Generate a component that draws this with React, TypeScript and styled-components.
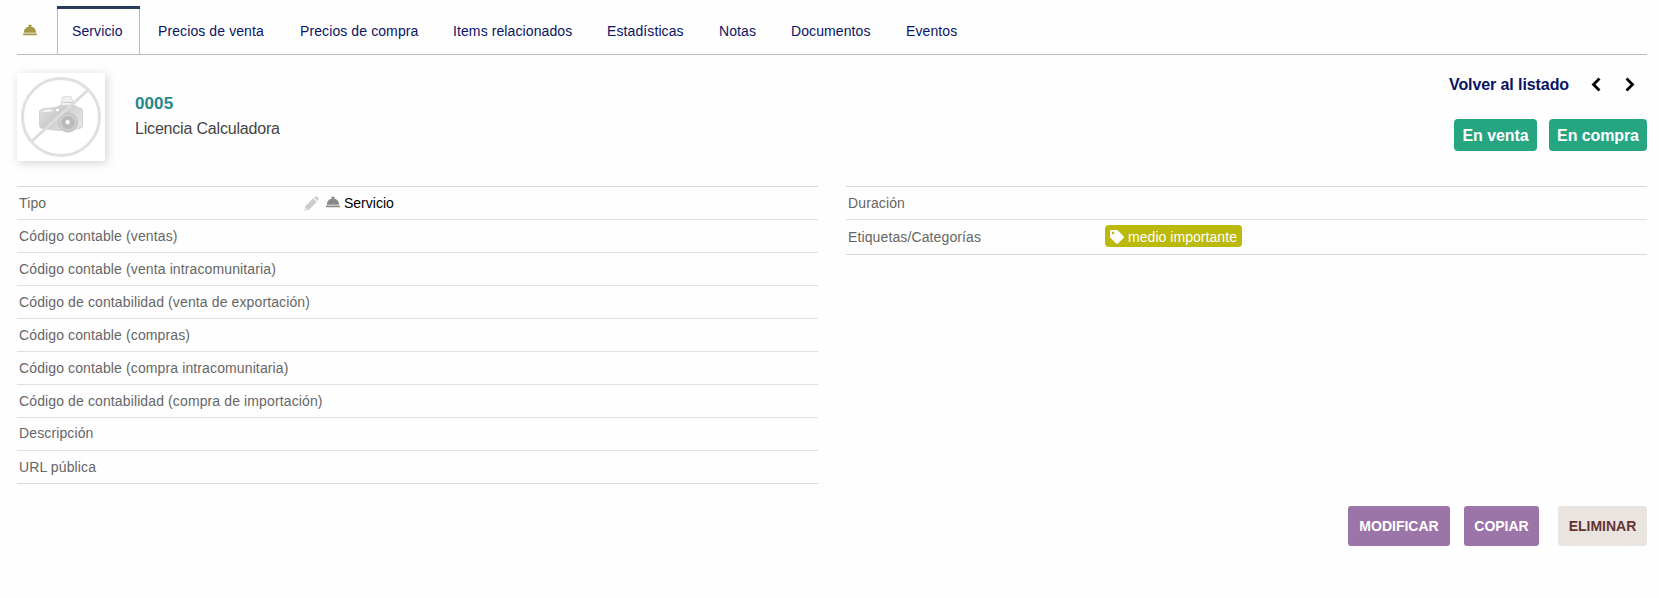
import React from 'react';
import styled, { createGlobalStyle } from 'styled-components';
import { FaTag, FaConciergeBell } from 'react-icons/fa';

const GlobalStyle = createGlobalStyle`
  * { box-sizing: border-box; }
  body {
    margin: 0;
    background: #fefefe;
    font-family: "Liberation Sans", Arial, sans-serif;
    font-size: 14px;
    color: #000;
  }
  a { text-decoration: none; color: inherit; }
`;

const Page = styled.main`
  padding: 6px 12px 0 17px;
`;

const TabBar = styled.nav`
  display: flex;
  height: 49px;
  border-bottom: 1px solid #bbb;
`;

const TabIcon = styled.span`
  display: flex;
  align-items: center;
  width: 40px;
  padding: 0 0 1px 6px;
  color: #a69944;
`;

const Tab = styled.a<{ $active?: boolean; $width: number }>`
  position: relative;
  width: ${(p) => p.$width}px;
  padding: 17px 0 0 ${(p) => (p.$active ? 14 : 18)}px;
  line-height: 16px;
  letter-spacing: 0.1px;
  white-space: nowrap;
  color: #0a1464;
  border: solid ${(p) => (p.$active ? '#bbb' : 'transparent')};
  border-width: 0 ${(p) => (p.$active ? 1 : 0)}px;
  &::before {
    content: '';
    display: ${(p) => (p.$active ? 'block' : 'none')};
    position: absolute;
    inset: 0 -1px auto;
    height: 3px;
    background: #263c5c;
  }
`;

const Banner = styled.header`
  display: flex;
  height: 131px;
  padding-top: 18px;
`;

const Photo = styled.div`
  width: 88px;
  height: 88px;
  background: #fff;
  box-shadow: 2px 2px 9px #d4d4d4;
`;

const Identity = styled.div`
  margin: 18px 0 0 30px;
  flex: 1;
`;

const Reference = styled.div`
  font-size: 17px;
  font-weight: bold;
  line-height: 25px;
  letter-spacing: 0.1px;
  color: #25888c;
`;

const Label = styled.div`
  font-size: 16px;
  line-height: 25px;
  letter-spacing: -0.19px;
  color: #444;
`;

const Status = styled.div`
  display: flex;
  flex-direction: column;
  align-items: flex-end;
`;

const Pager = styled.div`
  display: flex;
  align-items: center;
  height: 24px;
  padding-right: 12px;
  font-size: 16px;
  letter-spacing: -0.09px;
  font-weight: bold;
  color: #0a1464;
`;

const Chevron = styled.svg<{ $gap: number }>`
  width: 10px;
  height: 15px;
  margin: 0 0 1px ${(p) => p.$gap}px;
  fill: none;
  stroke: #000;
  stroke-width: 2.8;
`;

const Badges = styled.div`
  display: flex;
  gap: 12px;
  margin-top: 22px;
`;

const Badge = styled.span<{ $width: number }>`
  width: ${(p) => p.$width}px;
  height: 32px;
  border-radius: 4px;
  background: #25a580;
  color: #fff;
  font-size: 16px;
  font-weight: bold;
  line-height: 33px;
  letter-spacing: -0.1px;
  text-align: center;
`;

const Columns = styled.div`
  display: grid;
  grid-template-columns: 801px 801px;
  gap: 28px;
  align-items: start;
`;

const Fields = styled.section`
  border-top: 1px solid #d8d8d8;
`;

const Field = styled.div<{ $height?: number; $lift?: number }>`
  display: flex;
  align-items: center;
  height: ${(p) => p.$height ?? 33}px;
  padding: 0 2px ${(p) => p.$lift ?? 0}px;
  border-bottom: 1px solid #e0e0e0;
  letter-spacing: 0.12px;
  color: #666;
  &:last-child { border-color: #d8d8d8; }
`;

const FieldName = styled.span<{ $width: number }>`
  width: ${(p) => p.$width}px;
`;

const TypeValue = styled.span`
  display: flex;
  align-items: center;
  letter-spacing: 0;
  color: #000;
`;

const PencilIcon = styled.svg`
  width: 15px;
  height: 15px;
  margin: 1px 7px 0 0;
  fill: #ccc;
`;

const BellIcon = styled(FaConciergeBell)`
  margin: -2px 4px 0 0;
  color: #888;
`;

const Category = styled.span`
  display: flex;
  align-items: center;
  height: 22px;
  width: 137px;
  padding: 2px 0 0 5px;
  gap: 4px;
  margin-top: -2px;
  border-radius: 4px;
  background: #bbb90a;
  color: #fff;
  letter-spacing: 0.05px;
  line-height: 16px;
`;

const Actions = styled.footer`
  display: flex;
  justify-content: flex-end;
  margin-top: 22px;
`;

const Action = styled.button<{ $danger?: boolean; $width: number }>`
  width: ${(p) => p.$width}px;
  height: 40px;
  margin-left: ${(p) => (p.$danger ? 19 : 14)}px;
  padding: 0;
  border: 0;
  border-radius: 3px;
  background: ${(p) => (p.$danger ? '#e9e4e0' : '#9c75a8')};
  color: ${(p) => (p.$danger ? '#633' : '#fff')};
  font: bold 14px "Liberation Sans", Arial, sans-serif;
  text-transform: uppercase;
`;

const NoPhoto = () => (
  <svg width="88" height="88" viewBox="0 0 88 88">
    <defs>
      <linearGradient id="body" x1="0" y1="0" x2="1" y2=".6">
        <stop offset="0" stopColor="#e2e2e2" />
        <stop offset=".45" stopColor="#cdcdcd" />
        <stop offset="1" stopColor="#e2e2e2" />
      </linearGradient>
      <radialGradient id="lens">
        <stop offset="0" stopColor="#ddd" />
        <stop offset=".3" stopColor="#bbb" />
        <stop offset=".6" stopColor="#b8b8b8" />
        <stop offset=".75" stopColor="#d0d0d0" />
        <stop offset="1" stopColor="#c0c0c0" />
      </radialGradient>
    </defs>
    <path d="M43.500 33 L45.500 24 Q50 22.500 54.500 24 L56.500 33Z" fill="#f0f0f0" stroke="#ddd" />
    <path d="M45.500 29.500h10" stroke="#ccc" />
    <path d="M22.500 38 Q23 36 28 35.500 L39 34.500 L43 32.500 H58 L62 35 Q66 35 65.500 39 V53 Q65 55.500 60 56 L42 57.500 L25 55.500 Q22.500 55 22.500 52Z" fill="url(#body)" stroke="#d4d4d4" />
    <path d="M25 38.500 Q30 35.500 37 37 Q33 40 25 38.500Z" fill="#f4f4f4" />
    <circle cx="40.500" cy="37" r="2" fill="#fff" stroke="#ccc" />
    <circle cx="51" cy="49.500" r="9.700" fill="url(#lens)" stroke="#c8c8c8" />
    <circle cx="50.500" cy="49" r="2" fill="#fff" />
    <path d="M15 68 L71 17" stroke="#dcdcdc" strokeWidth="3" />
    <circle cx="44" cy="44" r="38.500" fill="none" stroke="#e0e0e0" strokeWidth="3" />
  </svg>
);

const tabs: [string, number][] = [
  ['Precios de venta', 142],
  ['Precios de compra', 153],
  ['Items relacionados', 154],
  ['Estadísticas', 112],
  ['Notas', 72],
  ['Documentos', 115],
  ['Eventos', 87],
];

const leftFields = [
  'Código contable (ventas)',
  'Código contable (venta intracomunitaria)',
  'Código de contabilidad (venta de exportación)',
  'Código contable (compras)',
  'Código contable (compra intracomunitaria)',
  'Código de contabilidad (compra de importación)',
  'Descripción',
  'URL pública',
];

export default function App() {
  return (
    <Page>
      <GlobalStyle />
      <TabBar>
        <TabIcon><FaConciergeBell size={14} /></TabIcon>
        <Tab $active $width={83} href="#">Servicio</Tab>
        {tabs.map(([name, width]) => (
          <Tab key={name} $width={width} href="#">{name}</Tab>
        ))}
      </TabBar>
      <Banner>
        <Photo><NoPhoto /></Photo>
        <Identity>
          <Reference>0005</Reference>
          <Label>Licencia Calculadora</Label>
        </Identity>
        <Status>
          <Pager>
            <a href="#">Volver al listado</a>
            <Chevron $gap={22} viewBox="0 0 10 15"><path d="M8.500 1.500 2.500 7.500l6 6" /></Chevron>
            <Chevron $gap={24} viewBox="0 0 10 15"><path d="m1.500 1.500 6 6-6 6" /></Chevron>
          </Pager>
          <Badges>
            <Badge $width={83}>En venta</Badge>
            <Badge $width={98}>En compra</Badge>
          </Badges>
        </Status>
      </Banner>
      <Columns>
        <Fields>
          <Field>
            <FieldName $width={285}>Tipo</FieldName>
            <TypeValue>
              <PencilIcon viewBox="0 0 15 15">
                <path d="M1.300 10.200 9.200 2.300 12.800 5.900 4.900 13.800 0.500 14.600ZM1.900 11.900 1.700 13.400 3.200 13.200 3.200 12Z" fillRule="evenodd" />
                <path d="M10 1.500 11 .6Q12 0 13 .8L14.300 2.100Q15 3 14.400 4L13.500 5.100Z" />
              </PencilIcon>
              <BellIcon size={14} />
              Servicio
            </TypeValue>
          </Field>
          {leftFields.map((name) => (
            <Field key={name} $lift={name === 'Descripción' ? 2 : 0}>{name}</Field>
          ))}
        </Fields>
        <Fields>
          <Field>Duración</Field>
          <Field $height={35}>
            <FieldName $width={257}>Etiquetas/Categorías</FieldName>
            <Category><FaTag size={14} />medio importante</Category>
          </Field>
        </Fields>
      </Columns>
      <Actions>
        <Action $width={102}>Modificar</Action>
        <Action $width={75}>Copiar</Action>
        <Action $danger $width={89}>Eliminar</Action>
      </Actions>
    </Page>
  );
}
